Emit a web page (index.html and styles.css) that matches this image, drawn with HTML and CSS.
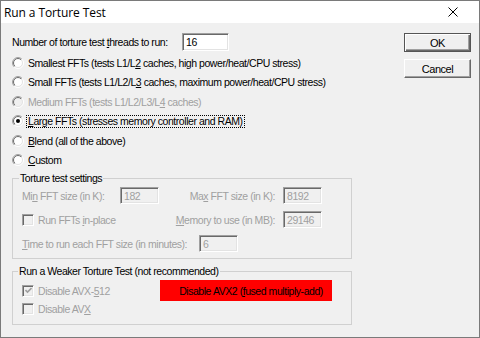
FILE: index.html
```html
<!DOCTYPE html>
<html lang="en">
<head>
  <meta charset="UTF-8" />
  <title>Run a Torture Test</title>
  <link rel="stylesheet" href="styles.css">
</head>
<body>

  <svg class="defs" aria-hidden="true">
    <defs>
      <linearGradient id="ring-out" x1="0" y1="0" x2="1" y2="1">
        <stop offset="0.5" stop-color="#a0a0a0"/>
        <stop offset="0.5" stop-color="#ffffff"/>
      </linearGradient>
      <linearGradient id="ring-in" x1="0" y1="0" x2="1" y2="1">
        <stop offset="0.5" stop-color="#696969"/>
        <stop offset="0.5" stop-color="#e3e3e3"/>
      </linearGradient>
    </defs>
  </svg>

  <div class="window">
    <div class="titlebar">
      <span class="title">Run a Torture Test</span>
      <svg class="close" viewBox="0 0 10 10"><path d="M0.5 0.5 L9.5 9.5 M9.5 0.5 L0.5 9.5" stroke="#000" stroke-width="1"/></svg>
    </div>

    <div class="client">
      <div class="main">
        <div class="threads">
          <span class="threads-label">Number of torture test <u>t</u>hreads to run:</span>
          <span class="field on wide">16</span>
        </div>

        <ul class="choices">
          <li>
            <svg class="radio" viewBox="0 0 12 12"><circle cx="6" cy="6" r="5.5" fill="none" stroke="url(#ring-out)"/><circle cx="6" cy="6" r="4.5" fill="#fff" stroke="url(#ring-in)"/></svg>
            <span>Smallest FFTs (tests L1/L<u>2</u> caches, high power/heat/CPU stress)</span>
          </li>
          <li>
            <svg class="radio" viewBox="0 0 12 12"><circle cx="6" cy="6" r="5.5" fill="none" stroke="url(#ring-out)"/><circle cx="6" cy="6" r="4.5" fill="#fff" stroke="url(#ring-in)"/></svg>
            <span>Small FFTs (tests L1/L2/L<u>3</u> caches, maximum power/heat/CPU stress)</span>
          </li>
          <li class="off">
            <svg class="radio" viewBox="0 0 12 12"><circle cx="6" cy="6" r="5.5" fill="none" stroke="url(#ring-out)"/><circle cx="6" cy="6" r="4.5" fill="#f0f0f0" stroke="url(#ring-in)"/></svg>
            <span>Medium FFTs (tests L1/L2/L3/L<u>4</u> caches)</span>
          </li>
          <li>
            <svg class="radio" viewBox="0 0 12 12"><circle cx="6" cy="6" r="5.5" fill="none" stroke="url(#ring-out)"/><circle cx="6" cy="6" r="4.5" fill="#fff" stroke="url(#ring-in)"/><circle cx="6" cy="6" r="2" fill="#000"/></svg>
            <span class="focus"><u>L</u>arge FFTs (stresses memory controller and RAM)</span>
          </li>
          <li>
            <svg class="radio" viewBox="0 0 12 12"><circle cx="6" cy="6" r="5.5" fill="none" stroke="url(#ring-out)"/><circle cx="6" cy="6" r="4.5" fill="#fff" stroke="url(#ring-in)"/></svg>
            <span><u>B</u>lend (all of the above)</span>
          </li>
          <li>
            <svg class="radio" viewBox="0 0 12 12"><circle cx="6" cy="6" r="5.5" fill="none" stroke="url(#ring-out)"/><circle cx="6" cy="6" r="4.5" fill="#fff" stroke="url(#ring-in)"/></svg>
            <span><u>C</u>ustom</span>
          </li>
        </ul>

        <fieldset class="group settings">
          <legend>Torture test settings</legend>
          <div class="row">
            <span class="off min-label">Mi<u>n</u> FFT size (in K):</span>
            <span class="field">182</span>
            <span class="off right-label">Ma<u>x</u> FFT size (in K):</span>
            <span class="field">8192</span>
          </div>
          <div class="row">
            <span class="check-item off"><span class="check"></span><span>Run FFTs <u>i</u>n-place</span></span>
            <span class="off right-label"><u>M</u>emory to use (in MB):</span>
            <span class="field">29146</span>
          </div>
          <div class="row">
            <span class="off time-label"><u>T</u>ime to run each FFT size (in minutes):</span>
            <span class="field">6</span>
          </div>
        </fieldset>

        <fieldset class="group weaker">
          <legend>Run a Weaker Torture Test (not recommended)</legend>
          <div class="row tall">
            <span class="check-item off avx512">
              <span class="check"><svg viewBox="0 0 7 7"><path d="M0.5 3 L2.5 5 L6.5 1" fill="none" stroke="#a0a0a0" stroke-width="1.6"/></svg></span>
              <span>Disable AVX-<u>5</u>12</span>
            </span>
            <span class="alert"><span>Disable AVX2 (<u>f</u>used multiply-add)</span></span>
          </div>
          <div class="row short">
            <span class="check-item off"><span class="check"></span><span>Disable AV<u>X</u></span></span>
          </div>
        </fieldset>
      </div>

      <div class="buttons">
        <button class="btn default">OK</button>
        <button class="btn">Cancel</button>
      </div>
    </div>
  </div>

</body>
</html>
```

FILE: styles.css
```css
body {
  margin: 0;
  font-family: "Liberation Sans", Arial, sans-serif;
  font-size: 10.5px;
  letter-spacing: -0.45px;
  color: #000;
}

.defs {
  position: absolute;
  width: 0;
  height: 0;
}

.window {
  width: 480px;
  height: 338px;
  box-sizing: border-box;
  border: 1px solid #7a7a7a;
  background: #f0f0f0;
  display: flex;
  flex-direction: column;
}

.titlebar {
  height: 22px;
  flex: none;
  background: #fff;
  display: flex;
  align-items: center;
  padding-left: 3px;
}

.title {
  font-family: "Open Sans", "Noto Sans", sans-serif;
  font-size: 12px;
  letter-spacing: -0.1px;
}

.close {
  margin-left: auto;
  margin-right: 21px;
  width: 10px;
  height: 10px;
}

.client {
  display: flex;
  padding: 10px 8px 0 11px;
}

.main {
  width: 340px;
}

.threads {
  display: flex;
  align-items: center;
  height: 18px;
}

.threads-label {
  width: 170px;
}

.field {
  box-sizing: border-box;
  width: 39px;
  height: 17px;
  border-top: 1px solid #a0a0a0;
  border-left: 1px solid #a0a0a0;
  border-right: 1px solid #fff;
  border-bottom: 1px solid #fff;
  box-shadow: inset 1px 1px 0 #696969, inset -1px -1px 0 #e3e3e3;
  padding: 2px 0 0 3px;
  line-height: 12px;
  color: #a0a0a0;
  flex: none;
}

.field.on {
  background: #fff;
  color: #000;
}

.field.wide {
  width: 47px;
  height: 18px;
}

.choices {
  list-style: none;
  margin: 2px 0 0;
  padding: 0;
}

.choices li {
  height: 19.5px;
  display: flex;
  align-items: center;
  white-space: nowrap;
}

.radio {
  width: 12px;
  height: 12px;
  margin-right: 4px;
  flex: none;
}

.off {
  color: #a0a0a0;
}

.focus {
  margin-left: -2px;
  padding: 0 1px;
  border: 1px dotted #000;
  line-height: 11px;
}

.group {
  margin: 2px 0 0;
  padding: 3px 29px 6px 9px;
  border: 1px solid #d0d0d0;
  min-width: 0;
}

.group legend {
  padding: 0 1px;
  margin-left: -3px;
  line-height: 12px;
}

.weaker {
  margin-top: 6px;
  padding-bottom: 8px;
}

.weaker legend {
  margin-left: -4px;
}

.row {
  display: flex;
  align-items: center;
  height: 17px;
  white-space: nowrap;
}

.row + .row {
  margin-top: 7px;
}

.min-label {
  width: 98px;
  flex: none;
}

.right-label {
  flex: 1;
  text-align: right;
  padding-right: 8px;
}

.time-label {
  width: 177px;
  flex: none;
}

.check-item {
  display: flex;
  align-items: center;
  flex: none;
}

.check {
  box-sizing: border-box;
  width: 12px;
  height: 12px;
  margin-right: 4px;
  border-top: 1px solid #a0a0a0;
  border-left: 1px solid #a0a0a0;
  border-right: 1px solid #fff;
  border-bottom: 1px solid #fff;
  box-shadow: inset 1px 1px 0 #696969, inset -1px -1px 0 #e3e3e3;
  background: #f0f0f0;
  display: flex;
  align-items: center;
  justify-content: center;
  flex: none;
}

.check svg {
  width: 7px;
  height: 7px;
}

.row.tall {
  height: 21px;
}

.row.short {
  height: 14px;
  margin-top: 1px;
}

.avx512 {
  width: 138px;
}

.alert {
  flex: none;
  width: 172px;
  height: 21px;
  background: #ff0000;
  display: flex;
  align-items: center;
  justify-content: center;
  padding-left: 10px;
  box-sizing: border-box;
}

.buttons {
  margin-left: auto;
  display: flex;
  flex-direction: column;
  gap: 7px;
}

.btn {
  box-sizing: border-box;
  width: 67px;
  height: 19px;
  padding: 0;
  background: #f0f0f0;
  border: 1px solid;
  border-color: #fff #696969 #696969 #fff;
  box-shadow: inset -1px -1px 0 #a0a0a0;
  font: inherit;
  font-size: 11px;
  letter-spacing: inherit;
  color: #000;
}

.btn.default {
  border-color: #555;
  box-shadow: inset 1px 1px 0 #fff, inset -1px -1px 0 #696969, inset -2px -2px 0 #a0a0a0;
}
```
